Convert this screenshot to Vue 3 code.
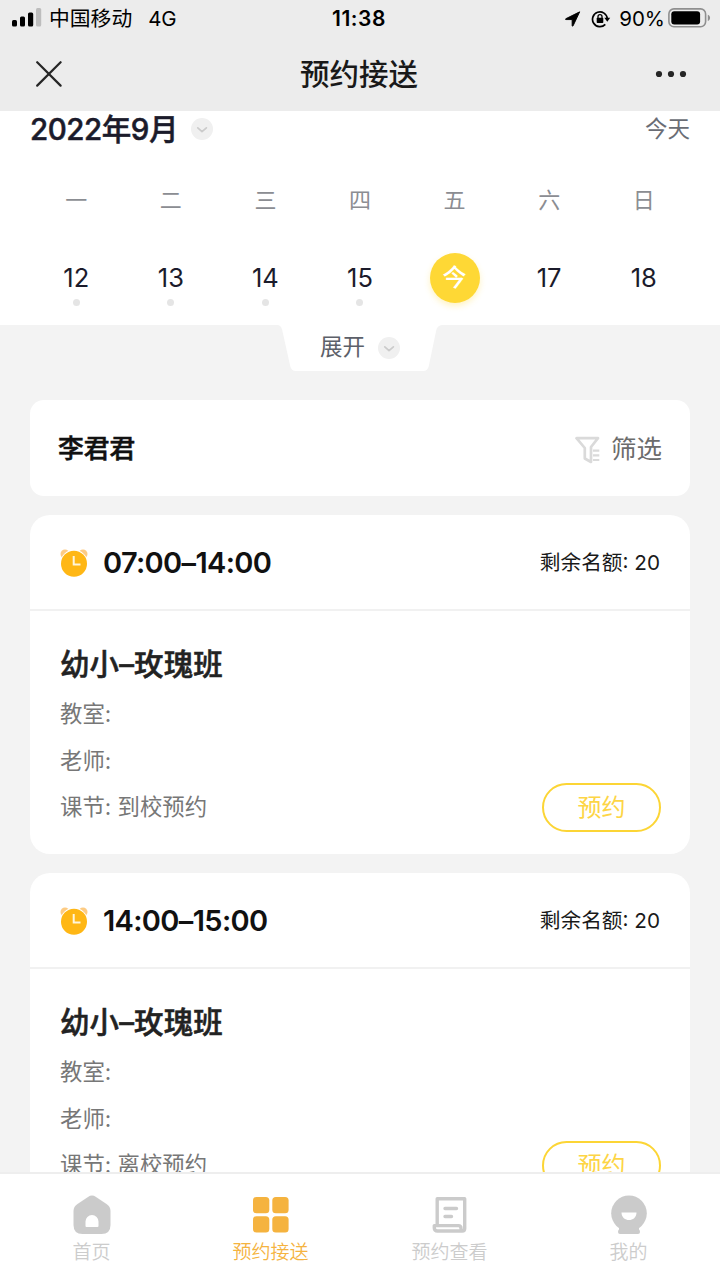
<script setup>
const weekdays = ['一', '二', '三', '四', '五', '六', '日']
const days = [
  { n: '12', dot: true },
  { n: '13', dot: true },
  { n: '14', dot: true },
  { n: '15', dot: true },
  { n: '今', today: true },
  { n: '17' },
  { n: '18' },
]
const sessions = [
  { time: '07:00–14:00', left: 20, name: '幼小–玫瑰班', lesson: '到校预约' },
  { time: '14:00–15:00', left: 20, name: '幼小–玫瑰班', lesson: '离校预约' },
]
</script>

<template>
  <div class="screen">
    <header class="top">
      <div class="status">
        <div class="carrier">
          <svg class="signal" width="30" height="19" viewBox="0 0 30 19">
            <rect x="0" y="12" width="5" height="6.5" rx="1.5" />
            <rect x="8" y="8.5" width="5" height="10" rx="1.5" />
            <rect x="16" y="4.5" width="5.2" height="14" rx="1.5" />
            <rect x="24" y="0" width="5.2" height="18.5" rx="1.5" fill="#bdbdbd" />
          </svg>
          <span class="operator">中国移动</span>
          <span class="network">4G</span>
        </div>
        <div class="clock">11:38</div>
        <div class="device">
          <svg width="16" height="16" viewBox="0 0 17 17">
            <path d="M15.6.9.9 8.200c-.6.300-.4.900.2.900h6.500v6.400c0 .7.700.900 1 .2z" stroke="#000" stroke-width="1" stroke-linejoin="round" />
          </svg>
          <svg class="lock" width="20" height="18" viewBox="0 0 20 18">
            <path d="M16.300 8.700A7.400 7.400 0 1 0 14.300 14.400" fill="none" stroke="#000" stroke-width="1.700" />
            <path d="M13.300 7.700h5.900l-2.900 4z" />
            <rect x="5.700" y="7.800" width="6.600" height="5.200" rx=".7" />
            <path d="M7 8.200V6.600a2 2 0 0 1 4 0v1.600" fill="none" stroke="#000" stroke-width="1.300" />
          </svg>
          <span class="percent">90%</span>
          <svg class="battery" width="43" height="20" viewBox="0 0 43 20">
            <rect x=".9" y=".9" width="36.700" height="17.800" rx="5" fill="none" stroke="#8f8f8f" stroke-width="1.600" />
            <rect x="3.300" y="3.200" width="28.800" height="13.200" rx="3" />
            <path d="M39.800 6.800c3 1.100 3 5 0 6.200z" fill="#8f8f8f" />
          </svg>
        </div>
      </div>
      <div class="nav">
        <svg class="close" width="26" height="26" viewBox="0 0 26 26">
          <path d="M1.200 1.200 24.600 24.600M24.600 1.200 1.200 24.600" stroke="#262626" stroke-width="2.200" stroke-linecap="round" />
        </svg>
        <h1>预约接送</h1>
        <svg class="more" width="32" height="8" viewBox="0 0 32 8" fill="#262626">
          <circle cx="4" cy="4" r="3.100" /><circle cx="16" cy="4" r="3.100" /><circle cx="28" cy="4" r="3.100" />
        </svg>
      </div>
    </header>

    <section class="calendar">
      <div class="month">
        <span class="title">2022年9月</span>
        <svg class="chev" width="22" height="22" viewBox="0 0 22 22">
          <circle cx="11" cy="11" r="11" fill="#f0f0f0" />
          <path d="M6.800 9.800 11 13.600l4.400-3.800" fill="none" stroke="#cbcbcb" stroke-width="1.700" stroke-linecap="round" stroke-linejoin="round" />
        </svg>
        <span class="today-link">今天</span>
      </div>
      <div class="week names">
        <span v-for="w in weekdays" :key="w">{{ w }}</span>
      </div>
      <div class="week dates">
        <div v-for="d in days" :key="d.n" class="day">
          <span :class="['num', { today: d.today }]">{{ d.n }}</span>
          <i v-if="d.dot" class="dot"></i>
        </div>
      </div>
    </section>

    <div class="expand">
      <svg class="shape" width="164" height="46" viewBox="0 0 164 46">
        <path d="M0 0H164Q159.500.3 158.300 5L150.800 41Q149.800 46 145 46H18Q13.200 46 12.200 41L4.200 5Q3 .3 0 0Z" fill="#fff" />
      </svg>
      <div class="expand-label">
        <span>展开</span>
        <svg width="22" height="22" viewBox="0 0 22 22">
          <circle cx="11" cy="11" r="11" fill="#f0f0f0" />
          <path d="M6.800 9.800 11 13.600l4.400-3.800" fill="none" stroke="#cbcbcb" stroke-width="1.700" stroke-linecap="round" stroke-linejoin="round" />
        </svg>
      </div>
    </div>

    <main class="list">
      <section class="student">
        <strong>李君君</strong>
        <div class="filter">
          <svg width="26" height="28" viewBox="0 0 26 28" fill="none" stroke="#dadada" stroke-width="2.700" stroke-linejoin="round">
            <path d="M1.500 2.200H23L16 11V26L9.800 22.500V12Z" />
            <path d="M18 14.600H24.300M18 19.300H24.300M18 24H24.300" stroke-width="2.200" />
          </svg>
          <span>筛选</span>
        </div>
      </section>

      <section v-for="s in sessions" :key="s.time" class="session">
        <div class="head">
          <svg class="alarm" width="28" height="29" viewBox="0 0 28 29">
            <circle cx="5" cy="5" r="4.500" fill="#fdcb83" />
            <circle cx="23" cy="5" r="4.500" fill="#fdcb83" />
            <circle cx="14" cy="14.800" r="14" fill="#fff" />
            <circle cx="14" cy="14.800" r="13" fill="#ffb715" />
            <path d="M13.700 7V15.500H20.500" fill="none" stroke="#fff6dc" stroke-width="2" />
          </svg>
          <span class="time">{{ s.time }}</span>
          <span class="quota">剩余名额: {{ s.left }}</span>
        </div>
        <div class="body">
          <h2>{{ s.name }}</h2>
          <p>教室:</p>
          <p>老师:</p>
          <p>课节: {{ s.lesson }}</p>
          <button>预约</button>
        </div>
      </section>
    </main>

    <footer class="tabs">
      <div class="tab">
        <svg width="40" height="40" viewBox="0 0 40 40">
          <path d="M16 1.900q4-2.600 8 0l10.500 7q4 2.700 4 7V30q0 9-9 9h-19q-9 0-9-9V15.900q0-4.300 4-7z" fill="#cbcbcb" />
          <path d="M13.500 31V26.500a6.500 6.500 0 0 1 13 0V31q0 1-1 1h-11q-1 0-1-1z" fill="#fff" />
        </svg>
        <span>首页</span>
      </div>
      <div class="tab active">
        <svg width="40" height="40" viewBox="0 0 40 40" fill="#f5b33f">
          <rect x="2" y="2" width="16.300" height="16.300" rx="3.500" />
          <rect x="21.300" y="2" width="16.300" height="16.300" rx="3.500" />
          <rect x="2" y="21.300" width="16.300" height="16.300" rx="3.500" />
          <rect x="21.300" y="21.300" width="16.300" height="16.300" rx="3.500" />
        </svg>
        <span>预约接送</span>
      </div>
      <div class="tab">
        <svg width="40" height="40" viewBox="0 0 40 40" fill="none" stroke="#cbcbcb" stroke-width="3.400" stroke-linecap="round" stroke-linejoin="round">
          <path d="M7.200 29V3.700H34.700V33.500Q34.700 36 32.200 36H7.500Q4.300 36 4.300 33V30.600H28.500Q31 30.600 31 33.500" />
          <path d="M15 13.500H26.500M15 21.500H21.500" />
        </svg>
        <span>预约查看</span>
      </div>
      <div class="tab">
        <svg width="40" height="40" viewBox="0 0 40 40">
          <circle cx="20" cy="18.300" r="17.800" fill="#cbcbcb" />
          <path d="M10 32H30V34.500Q31 35 31 37 31 39 29 39H11Q9 39 9 37 9 35 10 34.500Z" fill="#cbcbcb" />
          <path d="M12.500 17.500H27.500C27.500 27.500 12.500 27.500 12.500 17.500Z" fill="#fff" />
        </svg>
        <span>我的</span>
      </div>
    </footer>
  </div>
</template>

<style>
body { margin: 0; background: #f3f3f3; }
</style>

<style scoped>
.screen {
  width: 720px;
  height: 1280px;
  display: flex;
  flex-direction: column;
  overflow: hidden;
  background: #f3f3f3;
  color: #191919;
  font-family: Inter, "Noto Sans CJK SC", sans-serif;
}
svg { display: block; flex: none; }
h1, h2, p { margin: 0; }

.top { flex: none; height: 111px; background: #ececec; }
.status {
  height: 37px;
  display: grid;
  grid-template-columns: 1fr auto 1fr;
  align-items: center;
  padding: 0 9px 0 12px;
  color: #000;
  line-height: 37px;
}
.carrier { display: flex; align-items: center; font-size: 20.800px; }
.signal { margin-top: -3px; }
.operator { margin-left: 7px; }
.network { margin-left: 16px; font-size: 20.500px; letter-spacing: -0.200px; }
.clock { margin-left: -5px; font-size: 21px; font-weight: 600; letter-spacing: 0.500px; }
.device { display: flex; align-items: center; justify-content: flex-end; }
.lock { margin-left: 10px; }
.percent { margin-left: 8px; font-size: 20.500px; }
.battery { margin-left: 3px; margin-top: -2px; }

.nav {
  height: 74px;
  display: grid;
  grid-template-columns: 1fr auto 1fr;
  align-items: center;
  padding: 0 33px 2px 36px;
}
.nav h1 { margin-left: -5px; font-size: 29.500px; font-weight: 500; line-height: 72px; }
.close { margin-top: -1px; }
.more { justify-self: end; }

.calendar { flex: none; height: 214px; background: #fff; }
.month { height: 36px; display: flex; align-items: center; padding: 0 30px; line-height: 36px; }
.title { font-size: 29.500px; font-weight: 500; letter-spacing: -0.450px; color: #1b1b2b; -webkit-text-stroke: 0.500px; }
.chev { margin-left: 13px; }
.today-link { margin-left: auto; font-size: 22.500px; color: #6a6d75; }
.week { display: grid; grid-template-columns: repeat(7, 1fr); padding: 0 29px 0 29px; text-align: center; }
.names { height: 36px; margin-top: 35px; line-height: 36px; font-size: 22px; color: #8b8d92; }
.dates { margin-top: 35px; }
.day { display: flex; flex-direction: column; align-items: center; }
.num { width: 50px; height: 50px; line-height: 50px; font-size: 25.500px; color: #1b1b2b; }
.num.today {
  border-radius: 50%;
  background: #fed835;
  color: #fff;
  font-size: 24px;
  font-weight: 500;
  box-shadow: 0 3px 6px rgba(254, 216, 53, 0.300);
}
.dot { width: 7px; height: 7px; margin-top: -4px; border-radius: 50%; background: #e5e5e5; }

.expand { flex: none; width: 164px; height: 46px; margin-left: 278px; display: grid; }
.shape, .expand-label { grid-area: 1 / 1; }
.expand-label {
  display: flex;
  align-items: center;
  gap: 13px;
  padding-left: 42px;
  font-size: 22.500px;
  line-height: 44px;
  color: #5c6069;
}
.expand-label span { margin-top: -2px; }

.list { flex: 1; min-height: 0; overflow: hidden; padding: 29px 30px 0; }
.student {
  height: 96px;
  display: flex;
  align-items: center;
  justify-content: space-between;
  padding: 0 28px;
  box-sizing: border-box;
  border-radius: 14px;
  background: #fff;
}
.student strong { margin-top: -4px; font-size: 25.800px; font-weight: 500; color: #111; -webkit-text-stroke: 0.500px; }
.filter { display: flex; align-items: center; gap: 10px; font-size: 25.500px; color: #6c6c6c; }
.filter span { margin-top: -4px; }
.filter svg { margin-top: 3px; }
.session { height: 339px; margin-top: 19px; border-radius: 20px; background: #fff; }
.head {
  height: 96px;
  box-sizing: border-box;
  display: flex;
  align-items: center;
  padding: 0 30px;
  border-bottom: 2px solid #f1f1f1;
}
.alarm { margin-top: 2px; }
.time { margin-left: 15px; font-size: 29px; font-weight: 600; letter-spacing: -0.650px; color: #111; }
.quota { margin-left: auto; font-size: 20.700px; margin-top: -3px; }
.body { position: relative; padding: 30px 30px 0; }
.body h2 { margin-bottom: 4px; font-size: 29.500px; line-height: 46px; font-weight: 500; letter-spacing: 0.100px; color: #222; -webkit-text-stroke: 0.500px; }
.body p { font-size: 22.400px; line-height: 46.700px; color: #777; }
.body button {
  position: absolute;
  right: 29px;
  top: 172px;
  width: 119px;
  height: 49px;
  padding: 0;
  border: 2px solid #fcd535;
  border-radius: 25px;
  background: #fff;
  color: #fdd545;
  font: 400 24px/45px Inter, "Noto Sans CJK SC", sans-serif;
}

.tabs {
  flex: none;
  height: 108px;
  box-sizing: border-box;
  display: grid;
  grid-template-columns: repeat(4, 179px);
  padding: 21px 2px 0;
  border-top: 2px solid #eee;
  background: #fff;
}
.tab { display: flex; flex-direction: column; align-items: center; color: #ccc; }
.tab span { margin-top: 2px; font-size: 19px; line-height: 32px; font-weight: 350; }
.tab.active { color: #f5b33f; }
</style>
